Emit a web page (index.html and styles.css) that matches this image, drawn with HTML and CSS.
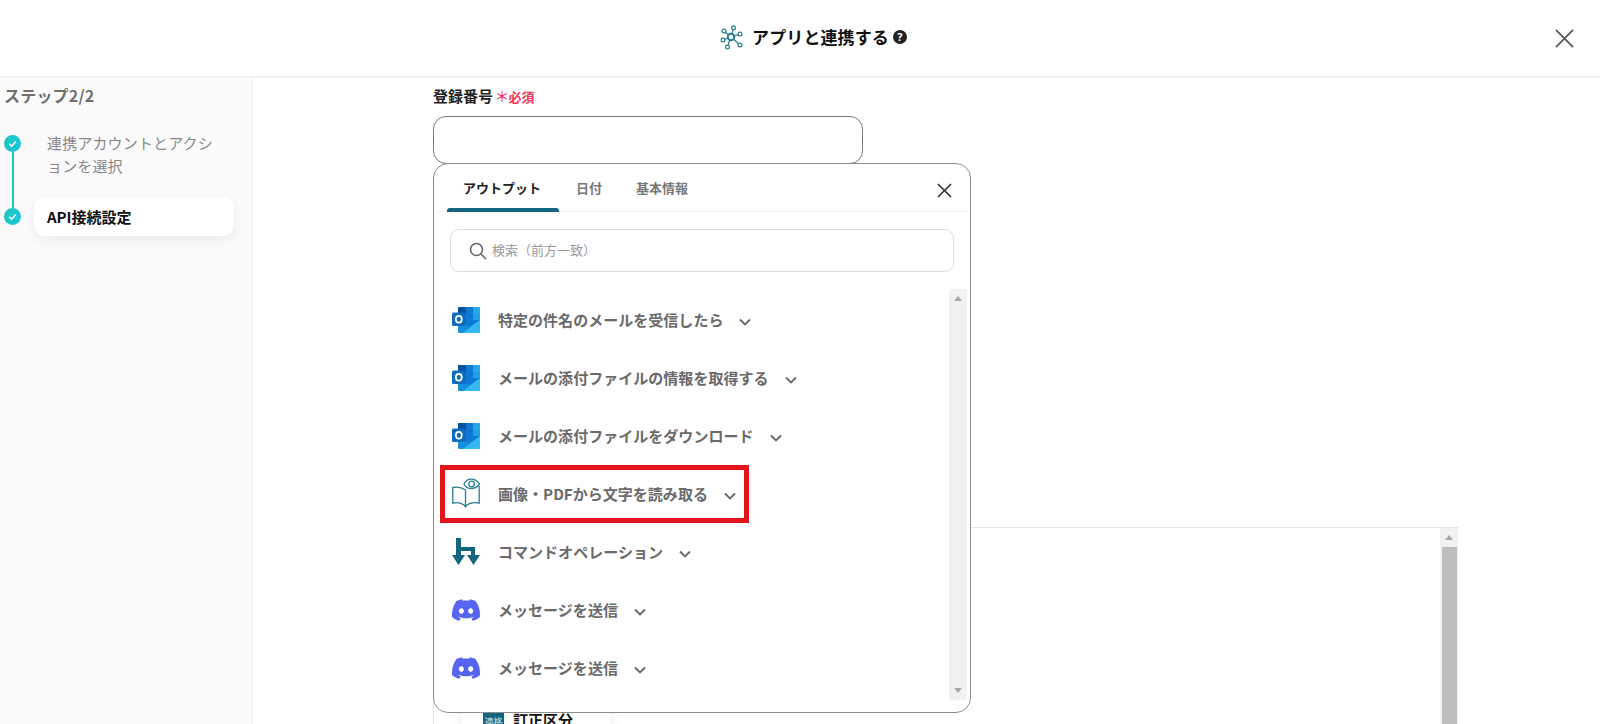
FILE: index.html
```html
<!DOCTYPE html>
<html lang="ja">
<head>
<meta charset="utf-8">
<title>アプリと連携する</title>
<link rel="stylesheet" href="styles.css">
</head>
<body>
<svg class="defs" width="0" height="0" aria-hidden="true">
  <symbol id="outlook" viewBox="0 0 28 26">
    <rect x="6" y="0" width="22" height="26" rx="1.500" fill="#1490df"/>
    <rect x="6" y="0" width="8" height="7" fill="#0a4f9e"/>
    <rect x="14" y="0" width="7" height="7" fill="#0f78d4"/>
    <rect x="21" y="0" width="7" height="7" fill="#28a8ea"/>
    <rect x="6" y="7" width="8" height="6" fill="#0364b8"/>
    <rect x="14" y="7" width="7" height="6" fill="#0f78d4"/>
    <rect x="21" y="7" width="7" height="6" fill="#1fa0e6"/>
    <path fill="#0a78d4" d="M6 13h22L17 20z"/>
    <path fill="#35b8f1" d="M28 13v13H11z"/>
    <rect x="0" y="5.500" width="13.500" height="13.500" rx="1.500" fill="#0f6cbd"/>
    <ellipse cx="6.800" cy="12.200" rx="3" ry="3.400" fill="none" stroke="#fff" stroke-width="1.700"/>
  </symbol>
  <symbol id="discord" viewBox="0 0 24 24">
    <path fill="#5865f2" d="M20.317 4.3698a19.7913 19.7913 0 00-4.8851-1.5152.0741.0741 0 00-.0785.0371c-.211.3753-.4447.8648-.6083 1.2495-1.8447-.2762-3.68-.2762-5.4868 0-.1636-.3933-.4058-.8742-.6177-1.2495a.077.077 0 00-.0785-.037 19.7363 19.7363 0 00-4.8852 1.515.0699.0699 0 00-.0321.0277C.5334 9.0458-.319 13.5799.0992 18.0578a.0824.0824 0 00.0312.0561c2.0528 1.5076 4.0413 2.4228 5.9929 3.0294a.0777.0777 0 00.0842-.0276c.4616-.6304.8731-1.2952 1.226-1.9942a.076.076 0 00-.0416-.1057c-.6528-.2476-1.2743-.5495-1.8722-.8923a.077.077 0 01-.0076-.1277c.1258-.0943.2517-.1923.3718-.2914a.0743.0743 0 01.0776-.0105c3.9278 1.7933 8.18 1.7933 12.0614 0a.0739.0739 0 01.0785.0095c.1202.099.246.1981.3728.2924a.077.077 0 01-.0066.1276 12.2986 12.2986 0 01-1.873.8914.0766.0766 0 00-.0407.1067c.3604.698.7719 1.3628 1.225 1.9932a.076.076 0 00.0842.0286c1.961-.6067 3.9495-1.5219 6.0023-3.0294a.077.077 0 00.0313-.0552c.5004-5.177-.8382-9.6739-3.5485-13.6604a.061.061 0 00-.0312-.0286zM8.02 15.3312c-1.1825 0-2.1569-1.0857-2.1569-2.419 0-1.3332.9555-2.4189 2.157-2.4189 1.2108 0 2.1757 1.0952 2.1568 2.419 0 1.3332-.9555 2.4189-2.1569 2.4189zm7.9748 0c-1.1825 0-2.1569-1.0857-2.1569-2.419 0-1.3332.9554-2.4189 2.1569-2.4189 1.2108 0 2.1757 1.0952 2.1568 2.419 0 1.3332-.946 2.4189-2.1568 2.4189Z"/>
  </symbol>
  <symbol id="chev" viewBox="0 0 12 8">
    <path d="M1 1.500l5 5 5-5" fill="none" stroke="#666" stroke-width="1.800"/>
  </symbol>
  <symbol id="check" viewBox="0 0 10 10">
    <path d="M2 5.200l2.200 2.200L8 3.200" fill="none" stroke="#fff" stroke-width="1.300"/>
  </symbol>
</svg>

<header class="topbar">
  <div class="title">
    <svg class="hub" viewBox="0 0 24 25" fill="none" stroke="#2a7d93" stroke-width="1.200">
      <circle cx="11" cy="12" r="3.200" stroke-width="2"/>
      <circle cx="13.500" cy="2.800" r="1.900"/><circle cx="4" cy="6" r="1.900"/><circle cx="3" cy="15" r="1.900"/>
      <circle cx="7.500" cy="22" r="1.900"/><circle cx="20" cy="20" r="1.900"/><circle cx="20" cy="9" r="1.900"/>
      <path d="M13 4.700L12 9M5.400 7.300L8.800 10M4.800 14.500L8 13M8 20.200L9.800 15M18.600 18.700L13.400 14M18.200 9.600L14 11"/>
    </svg>
    <span class="title-text">アプリと連携する</span>
    <span class="help">?</span>
  </div>
  <svg class="close-main" viewBox="0 0 20 20"><path d="M1 1l18 18M19 1L1 19" stroke="#555" stroke-width="1.800" fill="none"/></svg>
</header>

<div class="layout">
  <aside class="sidebar">
    <div class="step-title">ステップ2/2</div>
    <div class="steps">
      <div class="step">
        <span class="dot dot-link"><svg class="check"><use href="#check"/></svg></span>
        <span class="step-text">連携アカウントとアクションを選択</span>
      </div>
      <div class="step step-active">
        <span class="dot"><svg class="check"><use href="#check"/></svg></span>
        <span class="step-pill">API接続設定</span>
      </div>
    </div>
  </aside>

  <main class="content">
    <div class="field">
      <div class="label">登録番号 <span class="req"><span class="star">＊</span>必須</span></div>
      <div class="input-wrap">
        <div class="input"></div>
        <div class="popup">
          <div class="tabs">
            <span class="tab tab-on">アウトプット</span>
            <span class="tab">日付</span>
            <span class="tab">基本情報</span>
            <svg class="close-pop" viewBox="0 0 16 16"><path d="M1 1l14 14M15 1L1 15" stroke="#222" stroke-width="1.500" fill="none"/></svg>
          </div>
          <div class="search">
            <svg class="search-icon" viewBox="0 0 18 18" fill="none" stroke="#666" stroke-width="1.600"><circle cx="7.500" cy="7.500" r="6"/><path d="M12 12l5 5"/></svg>
            <span class="placeholder">検索（前方一致）</span>
          </div>
          <div class="list-area">
            <div class="list">
              <div class="row"><svg class="app"><use href="#outlook"/></svg><span class="row-text">特定の件名のメールを受信したら</span><svg class="chev"><use href="#chev"/></svg></div>
              <div class="row"><svg class="app"><use href="#outlook"/></svg><span class="row-text">メールの添付ファイルの情報を取得する</span><svg class="chev"><use href="#chev"/></svg></div>
              <div class="row"><svg class="app"><use href="#outlook"/></svg><span class="row-text">メールの添付ファイルをダウンロード</span><svg class="chev"><use href="#chev"/></svg></div>
              <div class="row">
                <svg class="app app-book" viewBox="0 0 28 30" fill="none" stroke="#2a7d93" stroke-width="1.300">
                  <path d="M13.500 12C10 9.500 5 8.500 .8 9.500V25c4.500-.8 9.500 0 12.700 3.500V12z"/>
                  <path d="M13.500 28.500c3-3.500 8-4.300 13.700-3.500V8"/>
                  <path d="M12 6c3-6.500 11-6.500 15.500 0-4.500 6-12.500 6-15.500 0z" fill="#fff"/>
                  <circle cx="19.500" cy="6" r="2.800"/>
                </svg>
                <span class="row-text">画像・PDFから文字を読み取る</span><svg class="chev"><use href="#chev"/></svg>
                <span class="mark"></span>
              </div>
              <div class="row">
                <svg class="app" viewBox="0 0 28 28" fill="#14667f">
                  <path d="M4 0h5v9h14v9h-4v-5H9v5H4z"/>
                  <path d="M0 17h13l-6.500 10zM15 17h13l-6.500 10z"/>
                </svg>
                <span class="row-text">コマンドオペレーション</span><svg class="chev"><use href="#chev"/></svg>
              </div>
              <div class="row"><svg class="app"><use href="#discord"/></svg><span class="row-text">メッセージを送信</span><svg class="chev"><use href="#chev"/></svg></div>
              <div class="row"><svg class="app"><use href="#discord"/></svg><span class="row-text">メッセージを送信</span><svg class="chev"><use href="#chev"/></svg></div>
            </div>
            <div class="track"><span class="arrow-up"></span><span class="arrow-down"></span></div>
          </div>
        </div>
      </div>
      <div class="back-box">
        <div class="chip-wrap">
          <div class="chip"><span class="badge">適格</span><span class="chip-text">訂正区分</span></div>
        </div>
        <div class="back-track"><span class="arrow-up"></span><span class="thumb"></span></div>
      </div>
    </div>
  </main>
</div>
</body>
</html>
```
FILE: styles.css
```css
* { box-sizing: border-box; }
html, body { margin: 0; height: 724px; overflow: hidden; background: #fff; }
body { font-family: "Noto Sans CJK JP", "Noto Sans", sans-serif; color: #000; }
.defs { position: absolute; }

.topbar { height: 78px; border-bottom: 2px solid #f2f2f2; display: flex; align-items: center; justify-content: center; padding-bottom: 2px; }
.title { display: flex; align-items: center; margin-left: 27px; }
.hub { width: 24px; height: 25px; margin-right: 8px; }
.title-text { font-size: 17px; font-weight: 700; line-height: 24px; color: #111; letter-spacing: .1px; }
.help { width: 14px; height: 14px; border-radius: 50%; background: #222; color: #fff; font-size: 11px; font-weight: 700; line-height: 14px; text-align: center; margin-left: 4px; font-family: "Noto Sans", sans-serif; }
.close-main { position: absolute; left: 1555px; top: 29px; width: 19px; height: 19px; }

.layout { display: flex; height: 646px; }
.sidebar { width: 253px; background: #fafafa; border-right: 1px solid #eee; padding: 6px 0 0 4px; flex: none; }
.step-title { font-size: 16px; font-weight: 700; color: #707070; line-height: 22px; letter-spacing: .2px; }
.steps { display: flex; flex-direction: column; gap: 20px; margin-top: 26px; }
.step { display: flex; align-items: flex-start; }
.step-active { align-items: center; }
.dot { width: 17px; height: 17px; border-radius: 50%; background: linear-gradient(100deg, #20c8b8, #1cc4e4); flex: none; position: relative; display: flex; align-items: center; justify-content: center; margin-top: 3px; }
.step-active .dot { margin-top: 0; }
.dot-link::after { content: ""; position: absolute; left: 7.500px; top: 100%; width: 2px; height: 57px; background: #12c6d4; }
.check { width: 11px; height: 11px; }
.step-text { width: 172px; margin-left: 26px; font-size: 15px; line-height: 22.500px; color: #888; letter-spacing: .15px; }
.step-pill { width: 200px; height: 39px; margin-left: 13px; padding-left: 13px; background: #fff; border-radius: 11px; box-shadow: 0 4px 12px rgba(0,0,0,.06); font-size: 15px; font-weight: 700; line-height: 39px; color: #111; }

.content { flex: 1; padding: 6px 142px 0 180px; min-width: 0; }
.field { width: 100%; }
.label { font-size: 15px; font-weight: 700; line-height: 24px; color: #222; height: 24px; margin-bottom: 8px; white-space: nowrap; }
.req { font-size: 13px; color: #f0345a; }
.star { font-size: 15px; font-weight: 400; margin-left: -2px; margin-right: -1px; }
.input-wrap { position: relative; height: 47px; }
.input { width: 430px; height: 48px; border: 1px solid #777; border-radius: 13px; background: #fff; }

.popup { position: absolute; left: 0; top: 47px; width: 538px; height: 550px; background: #fff; border: 1.500px solid #8c8c8c; border-radius: 15px; z-index: 5; padding: 0 3px; }
.tabs { height: 48px; display: flex; align-items: stretch; padding-left: 10px; border-bottom: 1px solid #eee; position: relative; }
.tab { padding: 0 17px; font-size: 13px; font-weight: 700; line-height: 47px; color: #777; height: 47px; }
.tab-on { color: #222; position: relative; padding: 0 18px 0 16px; }
.tab-on::after { content: ""; position: absolute; left: 0; right: 0; bottom: -1px; height: 4px; background: #14667f; border-radius: 3px 3px 0 0; }
.close-pop { width: 15px; height: 15px; margin: 19px 15px 0 auto; }
.search { height: 43px; margin: 17px 13px 0 13px; border: 1px solid #ddd; border-radius: 9px; display: flex; align-items: center; padding-left: 18px; }
.search-icon { width: 18px; height: 18px; }
.placeholder { font-size: 13px; color: #999; margin: 0 0 2px 5px; }
.list-area { display: flex; margin-top: 17px; height: 411px; }
.list { flex: 1; padding-top: 2px; min-width: 0; }
.row { height: 58px; display: flex; align-items: center; padding-left: 15px; position: relative; }
.app { width: 28px; height: 28px; flex: none; }
.app-book { height: 30px; margin-bottom: 3px; }
.row-text { margin: 0 0 2px 18px; font-size: 15px; font-weight: 700; color: #6a6a6a; white-space: nowrap; letter-spacing: .03px; }
.chev { width: 12px; height: 8px; margin-left: 16px; margin-top: 3px; flex: none; }
.mark { position: absolute; left: 3px; top: 0; width: 309px; height: 58px; border: 5px solid #e5131b; }
.track { width: 18px; background: #f1f1f1; position: relative; flex: none; }
.arrow-up { position: absolute; left: 50%; top: 7px; margin-left: -4px; border: 4px solid transparent; border-top: 0; border-bottom: 5px solid #a8a8a8; }
.arrow-down { position: absolute; left: 50%; bottom: 7px; margin-left: -4px; border: 4px solid transparent; border-bottom: 0; border-top: 5px solid #a8a8a8; }

.back-box { position: relative; height: 300px; margin-top: 364px; border: 1px solid #e4e4e4; border-bottom: 0; border-right: 0; display: flex; }
.chip-wrap { flex: 1; padding: 170px 0 0 27px; }
.chip { width: 150px; height: 60px; background: #fff; border-radius: 8px; box-shadow: 0 2px 10px rgba(0,0,0,.1); display: flex; align-items: flex-start; padding: 13px 0 0 22px; }
.badge { width: 21px; height: 21px; background: #14667f; color: #cfe6ee; font-size: 9px; line-height: 21px; text-align: center; border-radius: 2px; flex: none; }
.chip-text { font-size: 15px; font-weight: 700; line-height: 17px; margin-left: 9px; color: #111; }
.back-track { width: 18px; background: #f1f1f1; position: relative; flex: none; }
.thumb { position: absolute; left: 2px; top: 19px; width: 15px; height: 280px; background: #bdbdbd; }
```
